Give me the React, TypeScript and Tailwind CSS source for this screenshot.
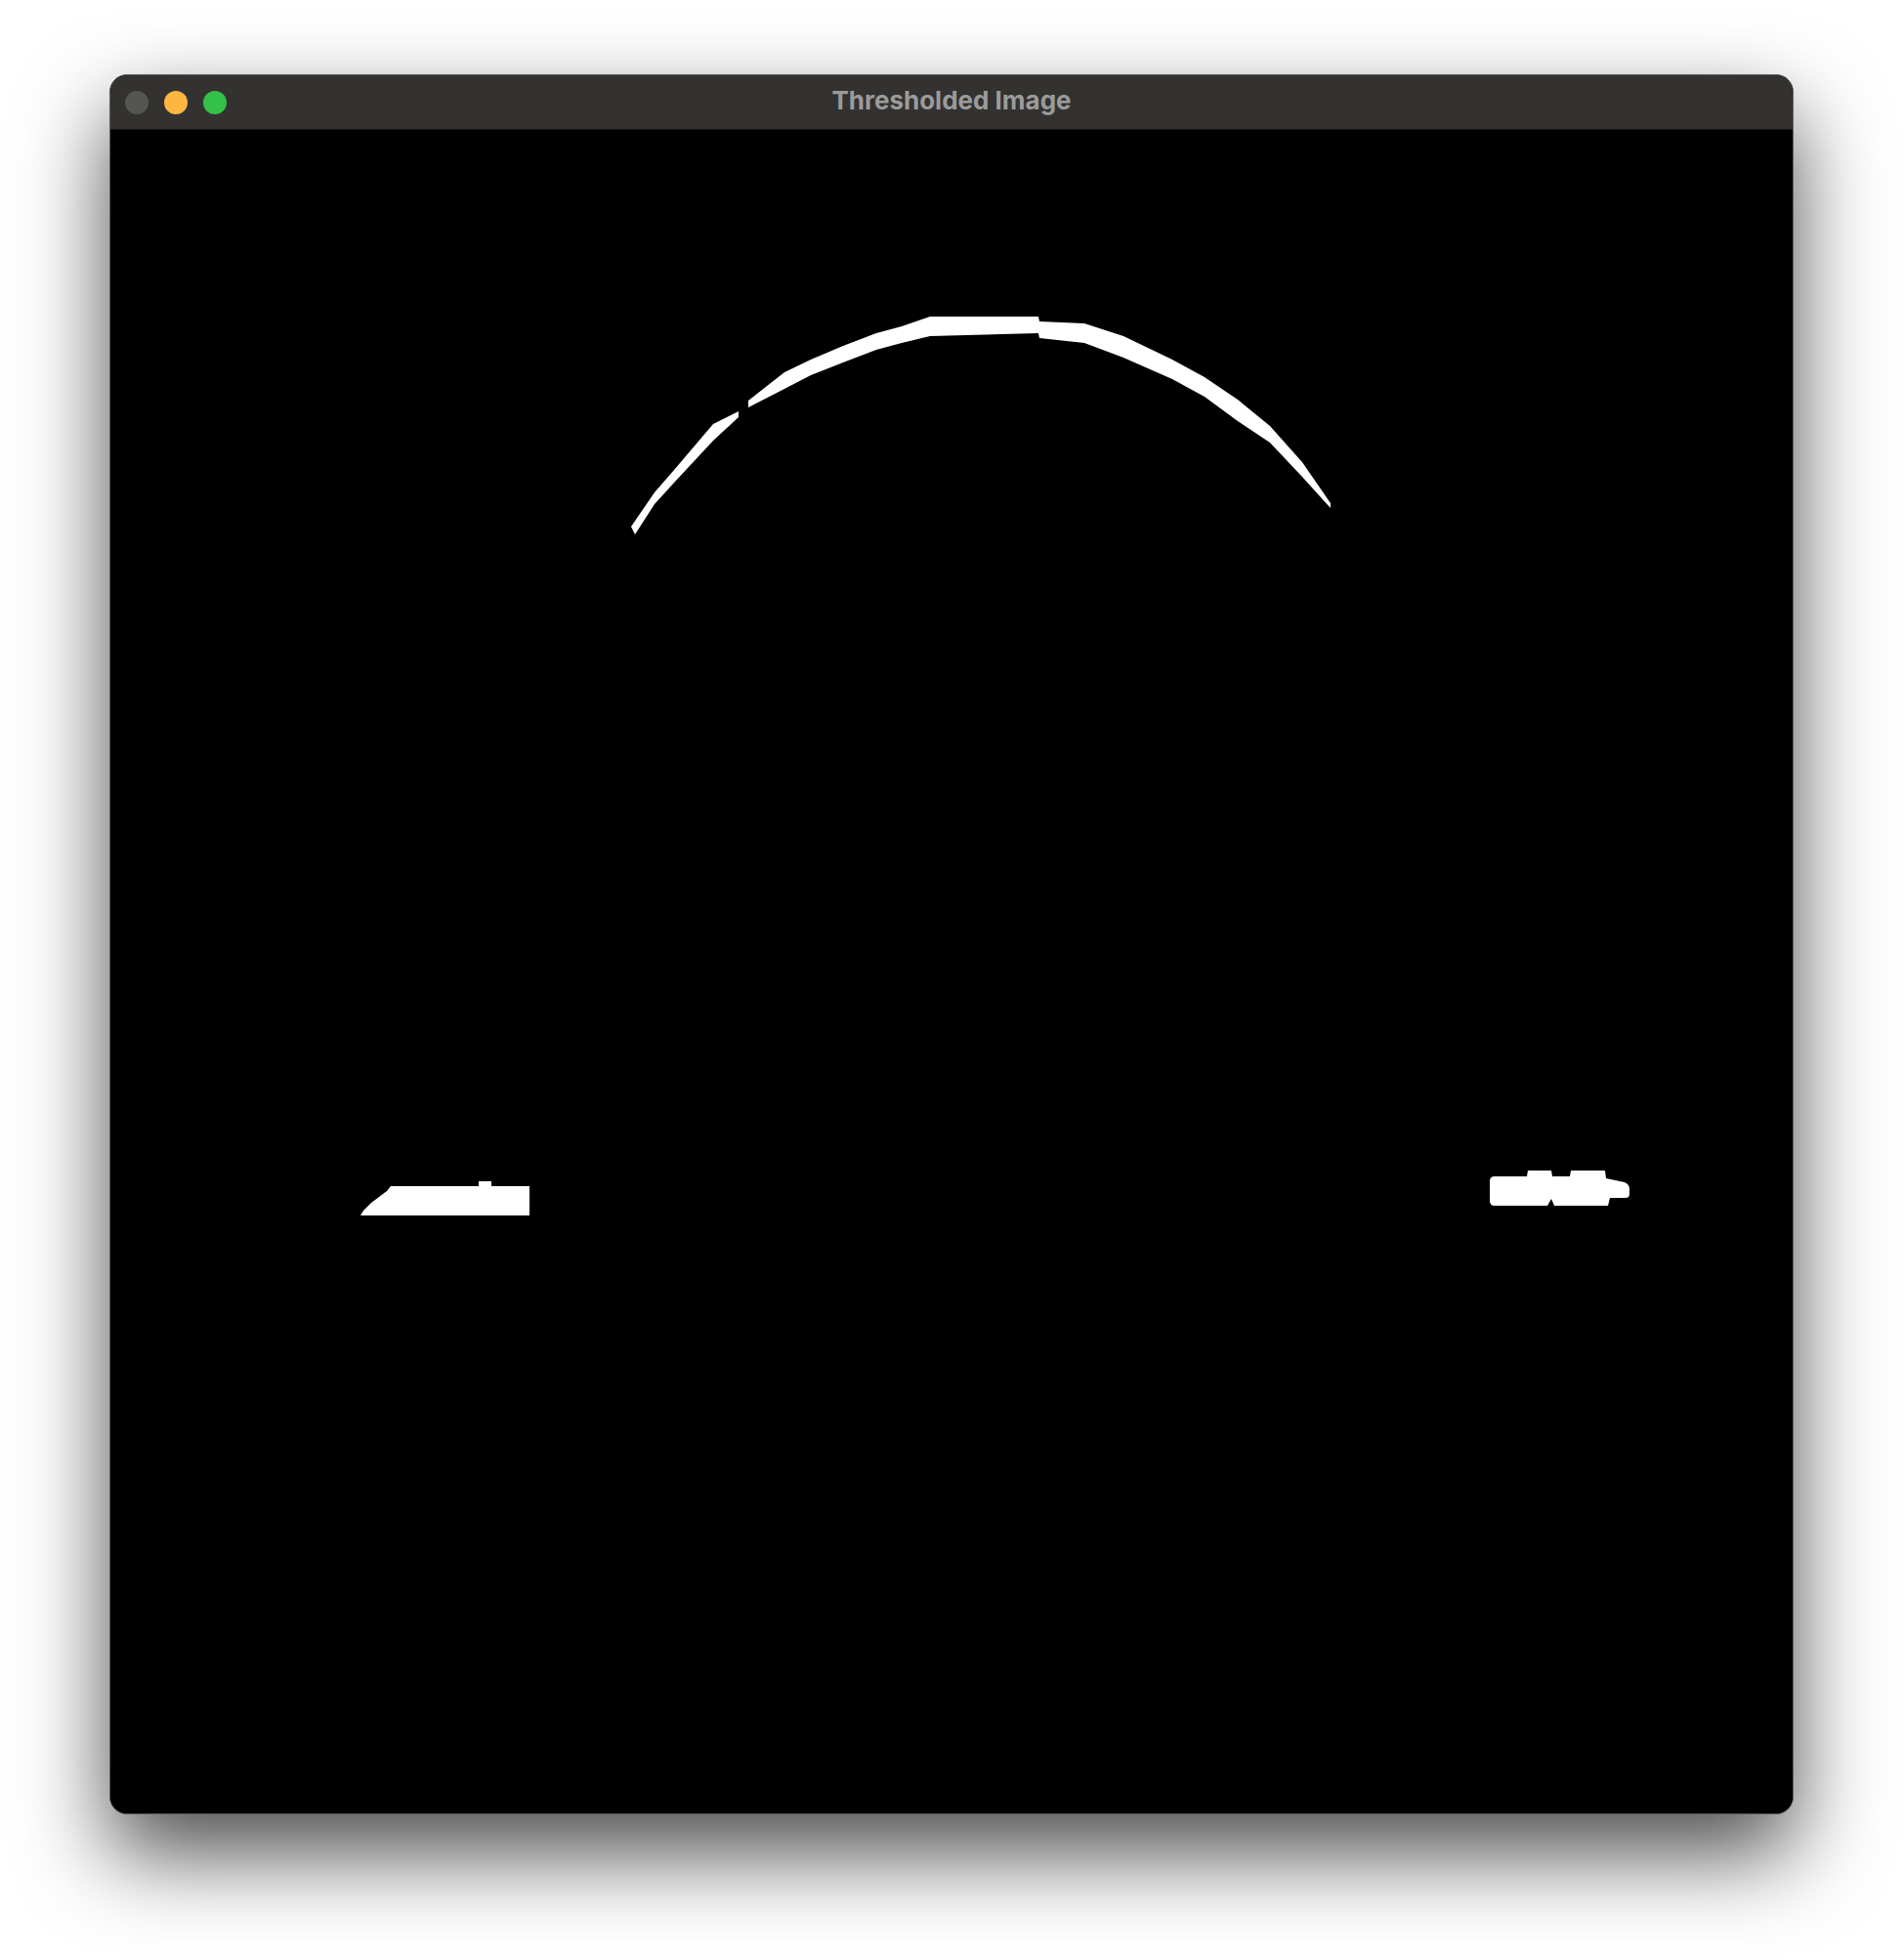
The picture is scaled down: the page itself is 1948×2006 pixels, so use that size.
import React from "react";

export default function App() {
  const arcRight =
    "766,409 803,380 830,367 863,353 897,340 923,333 952,323 1063,323 1064,328 1110,330 1150,343 1200,367 1233,385 1267,408 1300,435 1333,472 1362,514 " +
    "1362,519 1333,487 1300,452 1267,430 1233,405 1200,387 1150,365 1110,350 1064,345 1063,340 952,343 923,350 897,357 863,370 830,383 803,397 766,416";
  const arcLeft =
    "646,538 670,503 690,480 730,433 756,420 756,426 730,450 690,493 670,515 650,546";
  return (
    <div className="w-[1948px] h-[2006px] bg-white pt-[76px] pl-[112px]">
      <div className="w-[1724px] h-[1781px] rounded-[18px] border border-[#5e5e5e] bg-black overflow-hidden flex flex-col shadow-[0_40px_90px_rgba(0,0,0,0.7)]">
        <div className="relative h-[56px] shrink-0 bg-[#333230] border-b border-[#161616] flex items-center">
          <div className="flex items-center gap-[16px] pl-[15px]">
            <div className="w-[24px] h-[24px] rounded-full bg-[#555553]" />
            <div className="w-[24px] h-[24px] rounded-full bg-[#fdb740]" />
            <div className="w-[24px] h-[24px] rounded-full bg-[#33c14a]" />
          </div>
          <div className="absolute inset-0 flex items-center justify-center pb-[4px] pointer-events-none">
            <span className="text-[26px] font-bold text-[#9b9b9b] font-['Inter',sans-serif]">
              Thresholded Image
            </span>
          </div>
        </div>
        <div className="flex-1 bg-black">
          <svg width="1722" height="1723" viewBox="113 132 1722 1723" className="block">
            <polygon points={arcLeft} fill="#fff" />
            <polygon points={arcRight} fill="#fff" />
            <path
              d="M369,1243 L372,1238 L380,1230 L388,1224 L396,1218 L400,1213 L490,1213 L490,1208 L503,1208 L503,1213 L542,1213 L542,1243 Z"
              fill="#fff"
            />
            <path
              d="M1525,1208 Q1525,1203 1530,1203 L1563,1203 L1564,1197 L1588,1197 L1589,1203 L1607,1203 L1608,1197 L1643,1197 L1644,1205 L1663,1209 Q1668,1211 1668,1216 L1668,1221 Q1668,1225 1664,1225 L1648,1225 L1646,1233 L1591,1233 L1588,1226 L1584,1233 L1530,1233 Q1525,1233 1525,1228 Z"
              fill="#fff"
            />
          </svg>
        </div>
      </div>
    </div>
  );
}
